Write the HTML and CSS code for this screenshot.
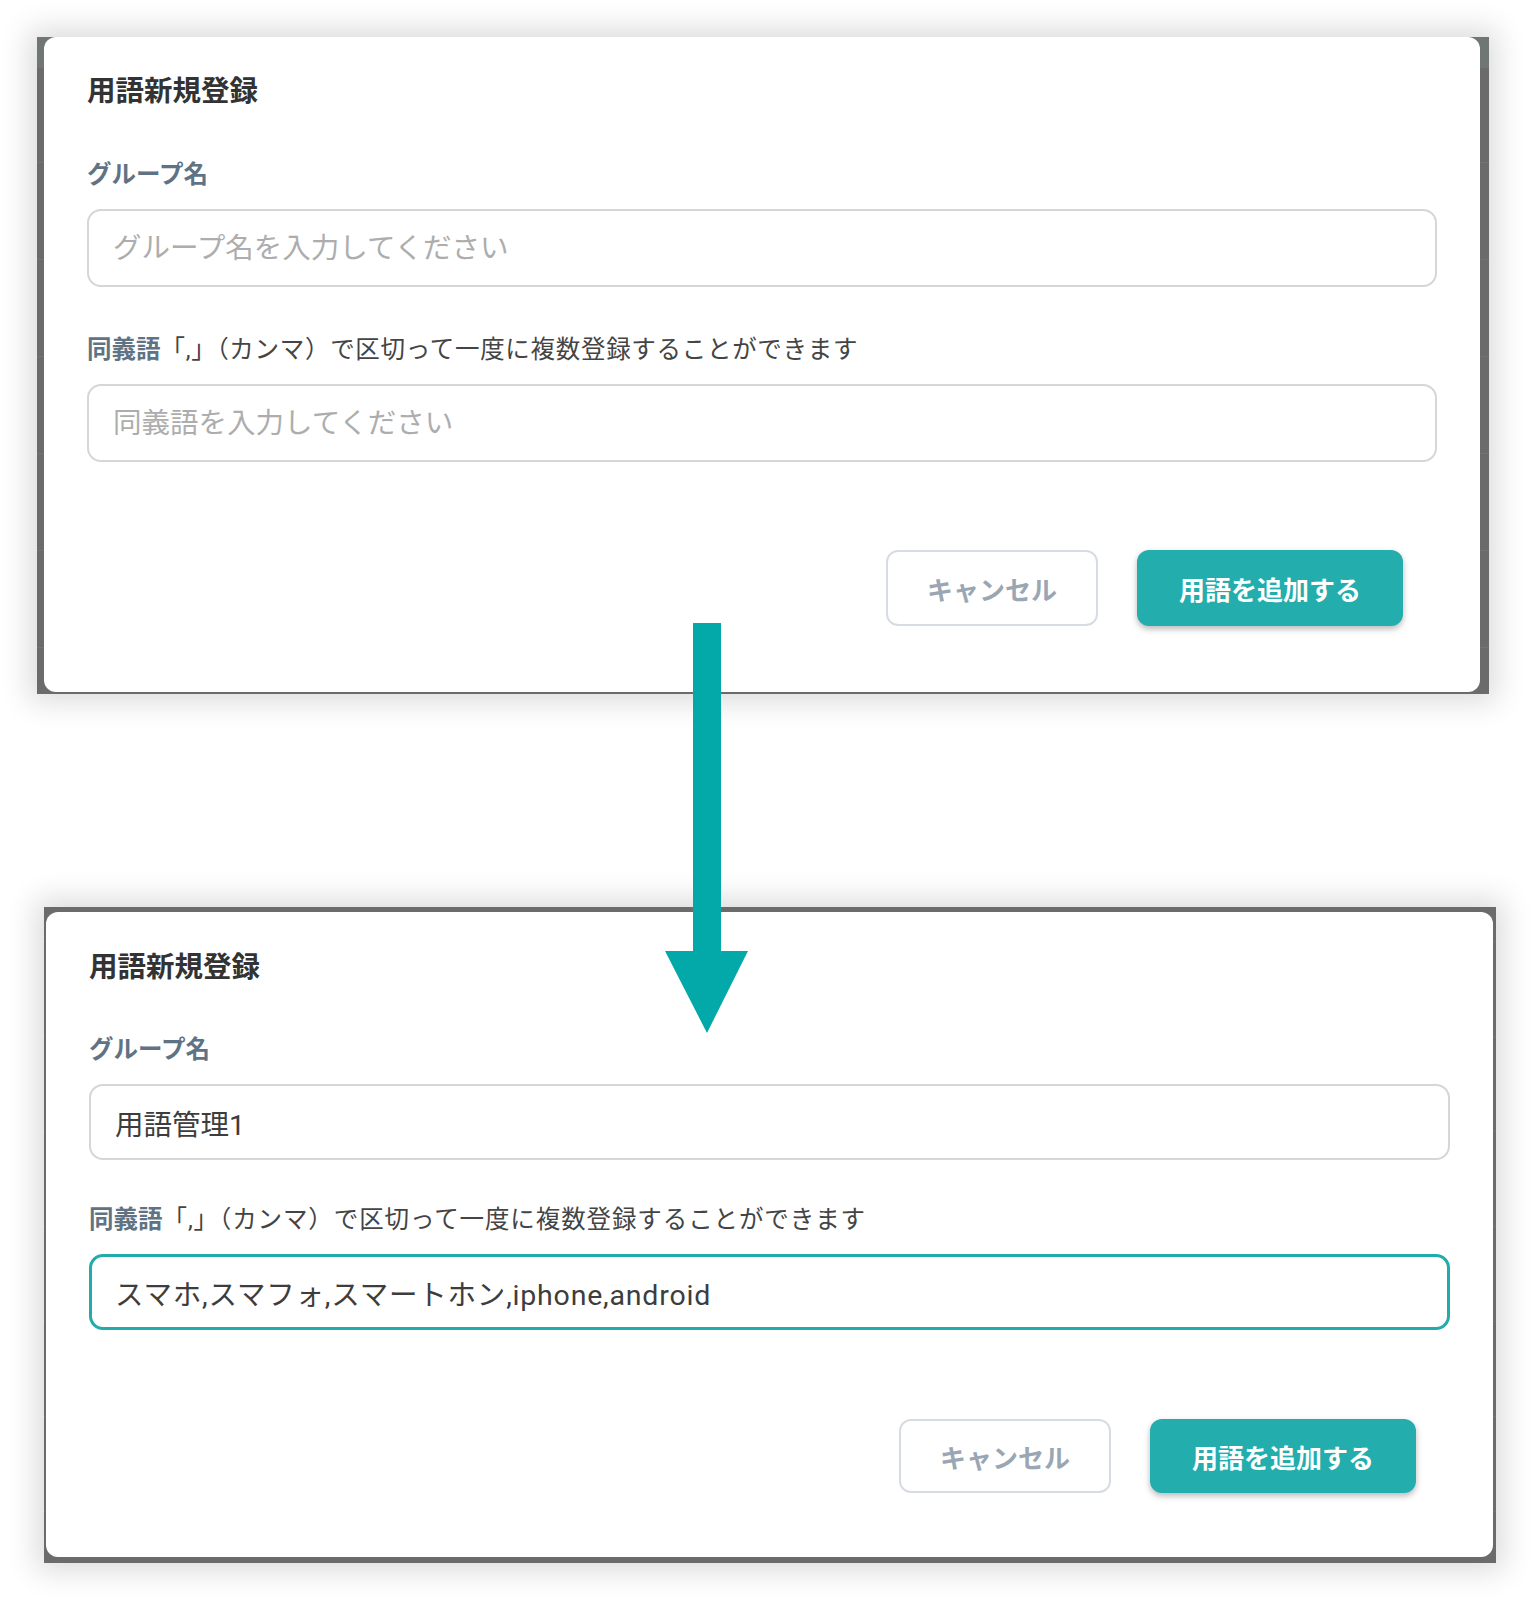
FILE: index.html
```html
<!DOCTYPE html>
<html lang="ja">
<head>
    <meta charset="UTF-8">
    <meta name="viewport" content="width=device-width, initial-scale=1.0">
    <link rel="stylesheet" href="styles.css">
    <title>用語新規登録</title>
</head>
<body>
    <div class="page">
        <!-- before: empty form -->
        <section class="shot shot-before">
            <div class="dialog">
                <h2 class="dialog-title">用語新規登録</h2>
                <div class="field field-first">
                    <label class="field-label"><b>グループ名</b></label>
                    <input class="field-input" type="text" placeholder="グループ名を入力してください">
                </div>
                <div class="field">
                    <label class="field-label"><b>同義語</b><span class="hint">「,」（カンマ）で区切って一度に複数登録することができます</span></label>
                    <input class="field-input" type="text" placeholder="同義語を入力してください">
                </div>
                <div class="dialog-actions">
                    <button class="btn btn-cancel">キャンセル</button>
                    <button class="btn btn-primary">用語を追加する</button>
                </div>
            </div>
        </section>

        <!-- after: filled form -->
        <section class="shot shot-after">
            <div class="dialog">
                <h2 class="dialog-title">用語新規登録</h2>
                <div class="field field-first">
                    <label class="field-label"><b>グループ名</b></label>
                    <input class="field-input" type="text" value="用語管理1">
                </div>
                <div class="field">
                    <label class="field-label"><b>同義語</b><span class="hint wide">「,」（カンマ）で区切って一度に複数登録することができます</span></label>
                    <input class="field-input synonyms is-focused" type="text" value="スマホ,スマフォ,スマートホン,iphone,android">
                </div>
                <div class="dialog-actions">
                    <button class="btn btn-cancel">キャンセル</button>
                    <button class="btn btn-primary">用語を追加する</button>
                </div>
            </div>
        </section>

        <svg class="flow-arrow" width="83" height="410" viewBox="0 0 83 410">
            <polygon points="28,0 56,0 56,328 83,328 42,410 0,328 28,328" fill="#03a8a8"/>
        </svg>
    </div>
</body>
</html>
```

FILE: styles.css
```css
body {
    margin: 0;
    background-color: #fff;
    font-family: Roboto, "Noto Sans CJK JP", sans-serif;
    color: #333;
}

.page {
    position: relative;
    padding-top: 37px;
    padding-bottom: 40px;
}

/* grey overlay strip around each dialog */
.shot {
    --pad-top: 37px;
    --title-gap: 49px;
    --field-gap: 47px;
    --input-h: 78px;
    --actions-gap: 88px;
    --btn-h: 76px;
    --pad-bottom: 66px;
    width: 1452px;
    box-sizing: border-box;
    background-color: #6b6b6b;
    box-shadow: 0 0 28px 8px rgba(0, 0, 0, 0.14);
}

.shot-before {
    margin-left: 37px;
    padding: 0 9px 2px 7px;
    background-image:
        linear-gradient(to bottom, #6f7673 0 31px, transparent 31px),
        repeating-linear-gradient(to bottom, transparent 0 28px, #747474 28px 29px, transparent 29px 97px);
}

.shot-after {
    --pad-top: 38px;
    --title-gap: 48px;
    --field-gap: 44px;
    --input-h: 76px;
    --actions-gap: 89px;
    --btn-h: 74px;
    --pad-bottom: 64px;
    margin-top: 213px;
    margin-left: 44px;
    padding: 5px 3px 6px 2px;
    background-image:
        repeating-linear-gradient(to bottom, transparent 0 34px, #747474 34px 35px, transparent 35px 95px);
}

.dialog {
    background-color: #fff;
    border-radius: 12px;
    padding: var(--pad-top) 43px var(--pad-bottom) 43px;
}

.dialog-title {
    margin: 0;
    font-size: 28.5px;
    line-height: 36px;
    font-weight: 700;
    color: #333;
}

.field {
    margin-top: var(--field-gap);
}

.field-first {
    margin-top: var(--title-gap);
}

.field-label {
    display: block;
    font-size: 24.5px;
    line-height: 32px;
    margin-bottom: 18px;
}

.field-label b {
    color: #5f7384;
    font-weight: 700;
}

.hint {
    color: #444;
    letter-spacing: 0.7px;
}

.hint.wide {
    letter-spacing: 0.9px;
}

.field-input {
    display: block;
    width: 100%;
    height: var(--input-h);
    box-sizing: border-box;
    padding: 0 24px;
    font-family: Roboto, "Noto Sans CJK JP", sans-serif;
    font-size: 28.5px;
    color: #3d3d3d;
    background: #fff;
    border: 2px solid #d6d6d6;
    border-radius: 14px;
    outline: none;
}

.field-input::placeholder {
    color: #adadad;
}

.field-input.synonyms {
    letter-spacing: 0.8px;
}

.field-input.is-focused {
    border: 3px solid #22abab;
    padding: 0 23px;
}

.dialog-actions {
    display: flex;
    justify-content: flex-end;
    gap: 39px;
    margin-top: var(--actions-gap);
    padding-right: 34px;
}

.btn {
    height: var(--btn-h);
    box-sizing: border-box;
    font-family: Roboto, "Noto Sans CJK JP", sans-serif;
    font-size: 26px;
    font-weight: 700;
    border-radius: 12px;
    cursor: pointer;
}

.btn-cancel {
    width: 212px;
    background-color: #fff;
    color: #9ba6b3;
    border: 2px solid #d7dce3;
}

.btn-primary {
    width: 266px;
    background-color: #24adad;
    color: #fff;
    border: none;
    box-shadow: 0 3px 6px rgba(0, 0, 0, 0.28);
}

.flow-arrow {
    position: absolute;
    left: 665px;
    top: 623px;
}
```
